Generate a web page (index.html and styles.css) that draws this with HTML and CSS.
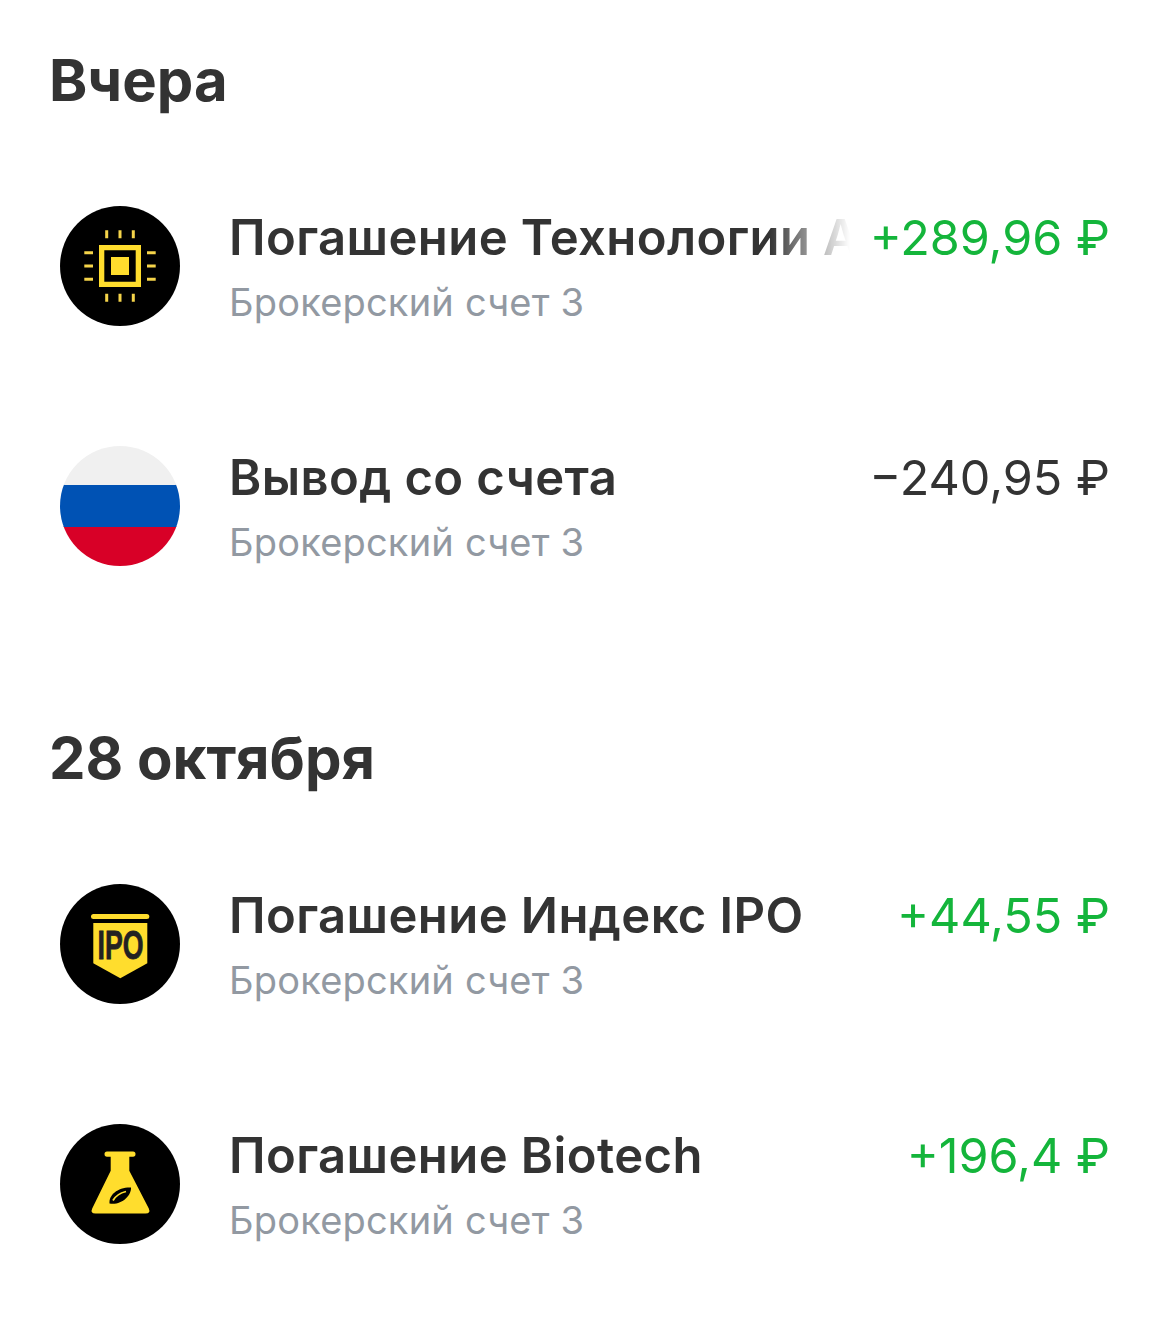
FILE: index.html
```html
<!DOCTYPE html>
<html lang="ru">
<head>
<meta charset="utf-8">
<title>Операции</title>
<link rel="stylesheet" href="styles.css">
</head>
<body>
<main class="page">
  <section class="day">
    <h2 class="day-title">Вчера</h2>
    <div class="row">
      <svg class="icon" viewBox="0 0 120 120">
        <circle cx="60" cy="60" r="60" fill="#000"/>
        <path fill-rule="evenodd" fill="#ffdd2d" d="M39 39h42v42H39zM44.300 44.300v31.400h31.400V44.300z"/>
        <rect x="51" y="51" width="18" height="18" fill="#ffdd2d"/>
        <path stroke="#f5d44a" stroke-width="3" d="M46.700 24.300v8M60 24.300v8M73.300 24.300v8M46.700 87.700v8M60 87.700v8M73.300 87.700v8M24.300 46.700h8.700M24.300 60h8.700M24.300 73.300h8.700M87 46.700h8.700M87 60h8.700M87 73.300h8.700"/>
      </svg>
      <div class="text">
        <div class="name name-fade">Погашение Технологии А</div>
        <div class="account">Брокерский счет 3</div>
      </div>
      <div class="amount plus">+289,96 ₽</div>
    </div>
    <div class="row">
      <svg class="icon" viewBox="0 0 120 120">
        <clipPath id="flag"><circle cx="60" cy="60" r="60"/></clipPath>
        <g clip-path="url(#flag)">
          <rect y="80" width="120" height="40" fill="#d80027"/>
          <rect y="38" width="120" height="43" fill="#0052b4"/>
          <rect width="120" height="39" fill="#f0f0f0"/>
        </g>
      </svg>
      <div class="text">
        <div class="name">Вывод со счета</div>
        <div class="account">Брокерский счет 3</div>
      </div>
      <div class="amount">−240,95 ₽</div>
    </div>
  </section>
  <section class="day">
    <h2 class="day-title">28 октября</h2>
    <div class="row">
      <svg class="icon" viewBox="0 0 120 120">
        <circle cx="60" cy="60" r="60" fill="#000"/>
        <rect x="31" y="30" width="58.300" height="5" rx="2.500" fill="#ffdd2d"/>
        <path fill="#ffdd2d" d="M33.300 39H87.300V79.300L60.300 94.300L33.300 79.300Z"/>
        <text class="ipo" x="37.500" y="75.300" textLength="46" lengthAdjust="spacingAndGlyphs">IPO</text>
      </svg>
      <div class="text">
        <div class="name">Погашение Индекс IPO</div>
        <div class="account">Брокерский счет 3</div>
      </div>
      <div class="amount plus">+44,55 ₽</div>
    </div>
    <div class="row">
      <svg class="icon" viewBox="0 0 120 120">
        <circle cx="60" cy="60" r="60" fill="#000"/>
        <path fill="#ffdd2d" d="M47 27.500H73Q75.500 27.500 75.500 30Q75.500 32.700 73 32.700H69.300V46.700L88.800 84.500Q91 89.500 85.500 89.500H35.500Q30 89.500 32.200 84.500L50.700 46.700V32.700H47Q44.500 32.700 44.500 30Q44.500 27.500 47 27.500Z"/>
        <path fill="#000" d="M49.500 79.500C48.500 71 58 63 71 63.500C71.500 72 61 81.500 49.500 79.500Z"/>
        <path fill="none" stroke="#ffdd2d" stroke-width="1.800" d="M53 76.500C55.500 72 60 69 66 67.500"/>
      </svg>
      <div class="text">
        <div class="name">Погашение Biotech</div>
        <div class="account">Брокерский счет 3</div>
      </div>
      <div class="amount plus">+196,4 ₽</div>
    </div>
  </section>
</main>
</body>
</html>
```
FILE: styles.css
```css
html, body {
  margin: 0;
  background: #fff;
}

.page {
  padding: 50px 60px 0 50px;
  font-family: Inter, "Liberation Sans", sans-serif;
  color: #333333;
}

.day + .day {
  margin-top: 162px;
}

.day-title {
  margin: 0 0 96px -1px;
  font-size: 58px;
  line-height: 60px;
  font-weight: 700;
}

.row {
  display: flex;
  align-items: flex-start;
  height: 120px;
  margin-left: 10px;
}

.row + .row {
  margin-top: 120px;
}

.icon {
  flex: none;
  width: 120px;
  height: 120px;
  margin-right: 49px;
}

.text {
  flex: 1;
  min-width: 0;
  padding-top: 2px;
}

.name {
  font-size: 49px;
  line-height: 60px;
  font-weight: 600;
  letter-spacing: 0.4px;
  white-space: nowrap;
  overflow: hidden;
}

.name-fade {
  margin-right: 20px;
  -webkit-mask-image: linear-gradient(90deg, #000 87%, transparent 100%);
  mask-image: linear-gradient(90deg, #000 87%, transparent 100%);
}

.account {
  margin-top: 4px;
  font-size: 38px;
  line-height: 60px;
  letter-spacing: 0.2px;
  color: #9299a2;
}

.amount {
  flex: none;
  padding-top: 2px;
  font-size: 48.5px;
  line-height: 60px;
  white-space: nowrap;
}

.plus {
  color: #14b53b;
}

.ipo {
  font-family: "Liberation Sans", sans-serif;
  font-size: 40px;
  font-weight: 700;
  fill: #222;
  stroke: #222;
  stroke-width: 0.8px;
}
```
